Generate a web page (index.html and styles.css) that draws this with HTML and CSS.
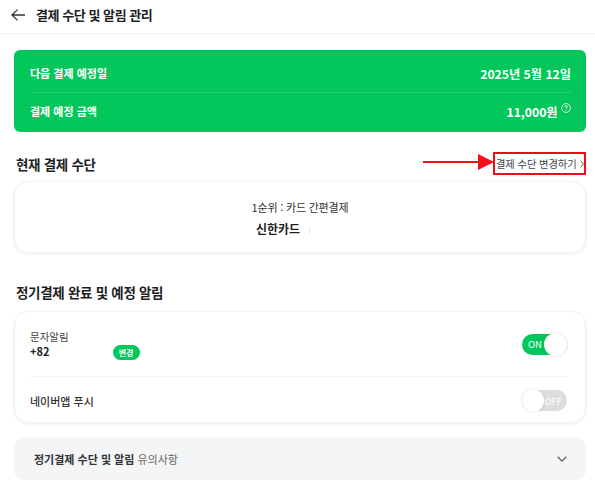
FILE: index.html
```html
<!DOCTYPE html>
<html lang="ko">
<head>
  <meta charset="UTF-8">
  <title>결제 수단 및 알림 관리</title>
  <link rel="stylesheet" href="styles.css">
</head>
<body>
  <header class="top-bar">
    <svg class="back-icon" width="14" height="12" viewBox="0 0 14 12" fill="none" stroke="#333" stroke-width="1.300">
      <path d="M14 6H1.200M6.500 .6L1 6l5.500 5.400"/>
    </svg>
    <h1 class="page-title">결제 수단 및 알림 관리</h1>
  </header>

  <main class="content">
    <section class="summary-card">
      <div class="summary-row first">
        <span class="summary-label">다음 결제 예정일</span>
        <span class="summary-value">2025년 5월 12일</span>
      </div>
      <div class="summary-row second">
        <span class="summary-label">결제 예정 금액</span>
        <span class="summary-value">11,000원
          <svg class="help-icon" width="10" height="10" viewBox="0 0 10 10" fill="none" stroke="#fff" stroke-width="0.8">
            <circle cx="5" cy="5" r="4.400"/>
            <path d="M3.600 4c0-1.800 2.800-1.800 2.800 0 0 .9-1.400 1-1.400 2M5 7v.8"/>
          </svg>
        </span>
      </div>
    </section>

    <div class="section-head">
      <h2 class="section-title">현재 결제 수단</h2>
      <a class="change-link">결제 수단 변경하기
        <svg width="4" height="8" viewBox="0 0 4 8" fill="none" stroke="#555" stroke-width="1"><path d="M.5 .6L3.500 4 .5 7.400"/></svg>
        <svg class="red-arrow" width="71" height="16" viewBox="0 0 71 16"><path d="M0 7h56v2H0z" fill="#f60d17"/><path d="M55 0l16 8-16 8z" fill="#f60d17"/></svg>
      </a>
    </div>

    <section class="card method-card">
      <div class="method-rank">1순위 : 카드 간편결제</div>
      <div class="method-name">신한카드<span class="method-sep"></span></div>
    </section>

    <h2 class="section-title alarm-title">정기결제 완료 및 예정 알림</h2>

    <section class="card alarm-card">
      <div class="alarm-row sms-row">
        <div class="sms-info">
          <div class="sms-label">문자알림</div>
          <div class="sms-number">+82 <span class="badge">변경</span></div>
        </div>
        <div class="toggle on"><span class="toggle-text">ON</span><span class="thumb"></span></div>
      </div>
      <div class="alarm-row push-row">
        <span class="push-label">네이버앱 푸시</span>
        <div class="toggle off"><span class="thumb"></span><span class="toggle-text">OFF</span></div>
      </div>
    </section>

    <section class="notice">
      <span class="notice-text"><b>정기결제 수단 및 알림</b> 유의사항</span>
      <svg width="10" height="6" viewBox="0 0 10 6" fill="none" stroke="#666" stroke-width="1.300"><path d="M.6 .8L5 5 9.400 .8"/></svg>
    </section>
  </main>
</body>
</html>
```

FILE: styles.css
```css
body {
  font-family: "Noto Sans CJK KR", "Noto Sans", sans-serif;
  background: #fff;
  margin: 0;
  color: #1e1e23;
  overflow: hidden;
}

.top-bar {
  display: flex;
  align-items: center;
  height: 30px;
  padding: 0 0 3px 11px;
  border-bottom: 1px solid #f4f4f5;
}

.back-icon {
  margin-right: 11px;
}

.page-title {
  margin: -2px 0 0;
  font-size: 13px;
  font-weight: 700;
  letter-spacing: -0.45px;
}

.content {
  padding: 16px 9px 0 14px;
}

.summary-card {
  background: #03c75a;
  border-radius: 6px;
  height: 82px;
  padding: 0 15px 0 16px;
  color: #fff;
  display: flex;
  flex-direction: column;
}

.summary-row {
  flex: 1;
  display: flex;
  justify-content: space-between;
  align-items: center;
  font-weight: 700;
  box-sizing: border-box;
}

.summary-row.first {
  padding-top: 4px;
}

.summary-row.second {
  border-top: 1px dotted #35d27b;
  padding-bottom: 2px;
}

.summary-label {
  font-size: 11px;
}

.first .summary-value {
  padding-top: 3px;
}

.second .summary-value {
  padding-top: 2px;
}

.summary-value {
  font-size: 12.200px;
}

.help-icon {
  vertical-align: 4px;
}

.section-head {
  display: flex;
  justify-content: space-between;
  align-items: center;
  margin-top: 20px;
  padding-left: 2px;
}

.section-title {
  margin: 0;
  font-size: 13.500px;
  font-weight: 700;
  letter-spacing: -0.3px;
}

.change-link {
  position: relative;
  display: flex;
  align-items: center;
  justify-content: space-between;
  box-sizing: border-box;
  width: 93px;
  height: 23px;
  padding: 0 0 0 1px;
  border: 2px solid #f00d16;
  font-size: 10.300px;
  letter-spacing: -0.1px;
  color: #444;
  white-space: nowrap;
}

.red-arrow {
  position: absolute;
  left: -72px;
  top: 0;
}

.card {
  background: #fff;
  border-radius: 14px;
  border: 1px solid #f3f3f4;
  box-shadow: 0 1px 3px rgba(0,0,0,0.08);
}

.method-card {
  margin-top: 6px;
  height: 72px;
  text-align: center;
  box-sizing: border-box;
  padding-top: 16px;
}

.method-rank {
  font-size: 11px;
  line-height: 18px;
  color: #333;
  letter-spacing: -0.2px;
}

.method-name {
  font-size: 12px;
  line-height: 18px;
  font-weight: 700;
  margin-top: 4px;
  padding-right: 34px;
}

.method-sep {
  display: inline-block;
  width: 1px;
  height: 8px;
  background: #e4e4e4;
  margin-left: 9px;
}

.alarm-title {
  margin-top: 29px;
  padding-left: 2px;
  line-height: 20px;
}

.alarm-card {
  margin-top: 9px;
  height: 112px;
  box-sizing: border-box;
  padding: 0 18px 0 15px;
}

.alarm-row {
  display: flex;
  justify-content: space-between;
  align-items: center;
}

.sms-row {
  height: 64px;
  border-bottom: 1px dotted #e2e2e2;
}

.push-row {
  height: 47px;
}

.sms-label {
  font-size: 10.500px;
  line-height: 15px;
  color: #444;
}

.sms-number {
  font-size: 11px;
  line-height: 15px;
  font-weight: 700;
  white-space: nowrap;
}

.badge {
  display: inline-block;
  margin-left: 60px;
  width: 27px;
  height: 15px;
  line-height: 15px;
  border-radius: 8px;
  background: #03c75a;
  color: #fff;
  font-size: 8px;
  text-align: center;
}

.push-label {
  font-size: 11px;
  color: #333;
  font-weight: 500;
}

.toggle {
  width: 45px;
  height: 21px;
  border-radius: 11px;
  display: flex;
  align-items: center;
  justify-content: space-between;
  box-sizing: border-box;
  font-size: 9.500px;
  color: #fff;
}

.toggle.on {
  background: #03c75a;
  padding-left: 6px;
}

.toggle.off {
  background: #dcdddf;
  padding-right: 5px;
}

.thumb {
  width: 23px;
  height: 23px;
  border-radius: 50%;
  background: #fff;
  box-shadow: 0 0 2px rgba(0,0,0,0.2);
}

.notice {
  margin-top: 14px;
  height: 43px;
  background: #f4f5f7;
  border-radius: 10px;
  display: flex;
  justify-content: space-between;
  align-items: center;
  padding: 0 19px 0 20px;
}

.notice-text {
  font-size: 11px;
  color: #666;
}

.notice-text b {
  color: #333;
}
```
